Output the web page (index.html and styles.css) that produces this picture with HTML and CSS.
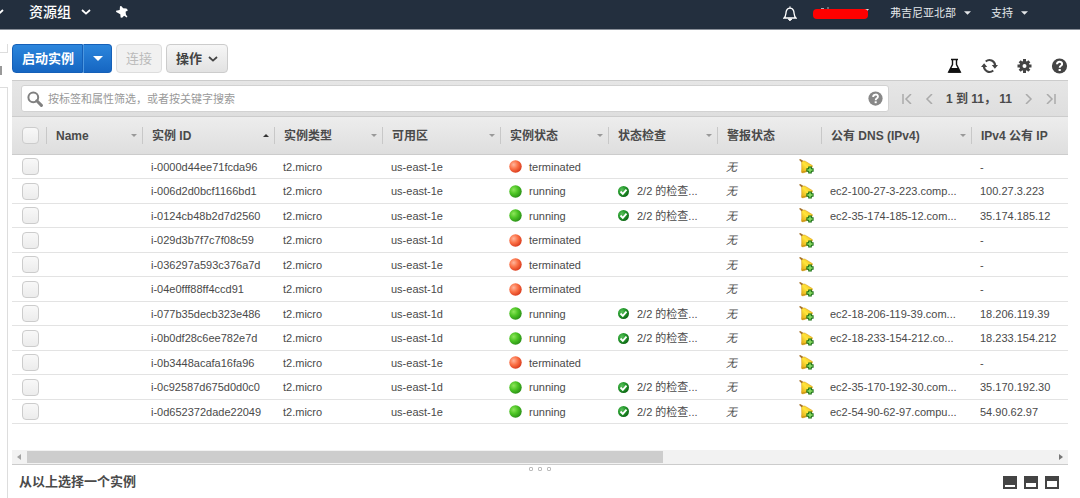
FILE: index.html
```
<!DOCTYPE html>
<html lang="zh-CN">
<head>
<meta charset="utf-8">
<title>实例</title>
<link rel="stylesheet" href="styles.css">
</head>
<body>
<svg class="defs" aria-hidden="true">
  <defs>
    <radialGradient id="g-red" cx="35%" cy="35%" r="70%"><stop offset="0" stop-color="#ffb59c"/><stop offset=".5" stop-color="#fb7146"/><stop offset="1" stop-color="#d93a1c"/></radialGradient>
    <radialGradient id="g-green" cx="35%" cy="35%" r="70%"><stop offset="0" stop-color="#8ee65c"/><stop offset=".5" stop-color="#4cc424"/><stop offset="1" stop-color="#2a8f17"/></radialGradient>
    <radialGradient id="g-ok" cx="35%" cy="35%" r="70%"><stop offset="0" stop-color="#5cc05c"/><stop offset=".5" stop-color="#249a2c"/><stop offset="1" stop-color="#0d6414"/></radialGradient>
    <linearGradient id="g-bell" x1="0" y1="1" x2="1" y2="0"><stop offset="0" stop-color="#e0a010"/><stop offset=".5" stop-color="#ffe53c"/><stop offset="1" stop-color="#f0b418"/></linearGradient>
  </defs>
  <symbol id="chev" viewBox="0 0 10 6"><path d="M1 1l4 3.600 4-3.600" fill="none" stroke="currentColor" stroke-width="1.800"/></symbol>
  <symbol id="down" viewBox="0 0 8 4"><path d="M0 0h8L4 4z" fill="currentColor"/></symbol>
  <symbol id="up" viewBox="0 0 8 4"><path d="M0 4h8L4 0z" fill="currentColor"/></symbol>
  <symbol id="red" viewBox="0 0 13 13"><circle cx="6.500" cy="6.500" r="6.200" fill="url(#g-red)"/></symbol>
  <symbol id="green" viewBox="0 0 13 13"><circle cx="6.500" cy="6.500" r="6.200" fill="url(#g-green)"/></symbol>
  <symbol id="ok" viewBox="0 0 13 13"><circle cx="6.500" cy="6.500" r="5.500" fill="url(#g-ok)"/><path d="M3.500 6.500l2.300 2.300 3.700-4.100" fill="none" stroke="#fff" stroke-width="1.900"/></symbol>
  <symbol id="alarm" viewBox="0 0 16 15"><path d="M0 .8L1.200 0l3 1.800L3.200 4z" fill="#a8742a"/><path d="M2.600 3.600C3.400 2.200 5 1.500 6.600 2.400L13.400 6.600C14.200 8.500 8 14.200 3 13.800 1.800 13.500 2.800 11.500 2.700 9z" fill="url(#g-bell)" stroke="#d39a14" stroke-width=".5"/><path d="M3 13.300C6.500 12.800 11 10.500 13 7.200" fill="none" stroke="#b8820e" stroke-width=".8"/><path d="M11 7.400v7.200M7.400 11h7.200" stroke="#176d12" stroke-width="3.600"/><path d="M11 8.400v5.200M8.400 11h5.200" stroke="#8fe268" stroke-width="1.500"/></symbol>
  <symbol id="help" viewBox="0 0 16 16"><circle cx="8" cy="8" r="7.600" fill="currentColor"/><path d="M5.500 6.300C5.600 3 10.700 3 10.600 6.100 10.500 7.900 8.200 7.700 8.200 9.800" fill="none" stroke="#fff" stroke-width="2"/><path d="M7.100 11h2.200v2H7.100z" fill="#fff"/></symbol>
</svg>

<header class="nav">
  <div class="nav-side">
    <button class="nav-item" aria-label="服务"><svg class="chev"><use href="#chev"/></svg></button>
    <button class="nav-item nav-group">资源组<svg class="chev"><use href="#chev"/></svg></button>
    <button class="nav-item" aria-label="固定"><svg class="pin" viewBox="0 0 12 12"><path d="M4 .2L5.200 0l2 2.300 3.200.2 1.600 1.800-2.400 1.500.3 2.700 1.500 2.300-.6.600-2.700-1.600-2 1.900-1.500-.3-.3-3.200L.2 6 0 4.800l3.700-.9z" fill="#fff"/></svg></button>
  </div>
  <div class="nav-side nav-right">
    <button class="nav-item" aria-label="通知"><svg class="notice" viewBox="0 0 14 15"><path d="M1 12c2.300-1.600 1.600-5 2.400-7.200C4 3.200 5.300 2.200 7 2.200s3 1 3.600 2.600C11.400 7 10.700 10.400 13 12z" fill="none" stroke="#fff" stroke-width="1.300"/><path d="M7 .3v2M5.200 13h3.600L7 14.800z" stroke="#fff" fill="#fff"/></svg></button>
    <button class="nav-item" aria-label="账户"><svg class="account" viewBox="0 0 57 12"><path d="M51 2h5l-2.500 3z" fill="#d9dde2"/><path d="M8 1.500h3M14 1h2" stroke="#aab0b8"/><rect y="2" width="55" height="10" rx="4" fill="#f00"/></svg></button>
    <button class="nav-item">弗吉尼亚北部<svg class="caret"><use href="#down"/></svg></button>
    <button class="nav-item">支持<svg class="caret"><use href="#down"/></svg></button>
  </div>
</header>

<div class="page">
  <aside class="rail"><div class="rail-top"></div><div class="rail-grip"></div><div class="rail-body"></div></aside>
  <main class="main">
    <div class="toolbar">
      <div class="actions">
        <div class="split"><button class="btn primary">启动实例</button><button class="btn primary more" aria-label="更多启动选项"><svg class="launch"><use href="#down"/></svg></button></div>
        <button class="btn" disabled>连接</button>
        <button class="btn">操作<svg class="chev"><use href="#chev"/></svg></button>
      </div>
      <div class="tools">
        <button class="tool" aria-label="实验"><svg viewBox="0 0 16 16"><path d="M4.500 1.500h7M6 2v4.500L2.200 14h11.600L10 6.500V2" fill="none" stroke="#111" stroke-width="1.400"/><path d="M4.300 10h7.400l2.500 4.800H1.800z" fill="#111"/></svg></button>
        <button class="tool" aria-label="刷新"><svg viewBox="0 0 18 16"><path d="M5 3.200C9 0 14.500 2.400 15 7.500M13 12.800C9 16 3.500 13.600 3 8.500" fill="none" stroke="#444" stroke-width="2.200"/><path d="M11.400 7H18l-3.300 4zM0 9h6.600L3.300 5z" fill="#444"/></svg></button>
        <button class="tool" aria-label="设置"><svg viewBox="0 0 16 16"><g stroke="#444" stroke-width="3"><path d="M8 1v14M1 8h14M3.200 3.200l9.600 9.600M12.800 3.200l-9.600 9.600"/></g><circle cx="8" cy="8" r="5" fill="#444"/><circle cx="8" cy="8" r="2" fill="#fff"/></svg></button>
        <button class="tool" aria-label="帮助"><svg viewBox="0 0 16 16"><use href="#help"/></svg></button>
      </div>
    </div>

    <div class="filter">
      <div class="search">
        <svg class="lens" viewBox="0 0 16 16"><circle cx="6.300" cy="6.300" r="4.900" fill="none" stroke="#808080" stroke-width="2"/><path d="M9.800 9.800l4.600 4.600" stroke="#808080" stroke-width="3" stroke-linecap="round"/></svg>
        <input type="text" aria-label="筛选实例" placeholder="按标签和属性筛选，或者按关键字搜索">
        <button class="hint" aria-label="搜索帮助"><svg viewBox="0 0 16 16"><use href="#help"/></svg></button>
      </div>
      <div class="pager">
        <button aria-label="第一页"><svg viewBox="0 0 10 10"><path d="M1 0v10M9 0L4 5l5 5"/></svg></button>
        <button aria-label="上一页"><svg viewBox="0 0 10 10"><path d="M8 0L3 5l5 5"/></svg></button>
        <span>1 到 11， 11</span>
        <button aria-label="下一页"><svg viewBox="0 0 10 10"><path d="M2 0l5 5-5 5"/></svg></button>
        <button aria-label="最后一页"><svg viewBox="0 0 10 10"><path d="M1 0l5 5-5 5M9 0v10"/></svg></button>
      </div>
    </div>

    <table class="grid">
      <colgroup><col class="c-pick"><col class="c-name"><col class="c-id"><col class="c-type"><col class="c-zone"><col class="c-state"><col class="c-check"><col class="c-alarm"><col class="c-dns"><col></colgroup>
      <thead>
        <tr>
          <th class="pick"><input type="checkbox" aria-label="全选"></th>
          <th><button class="head">Name<svg class="sort"><use href="#down"/></svg></button></th>
          <th><button class="head">实例 ID<svg class="sort on"><use href="#up"/></svg></button></th>
          <th><button class="head">实例类型<svg class="sort"><use href="#down"/></svg></button></th>
          <th><button class="head">可用区<svg class="sort"><use href="#down"/></svg></button></th>
          <th><button class="head">实例状态<svg class="sort"><use href="#down"/></svg></button></th>
          <th><button class="head">状态检查<svg class="sort"><use href="#down"/></svg></button></th>
          <th><div class="head">警报状态</div></th>
          <th><button class="head">公有 DNS (IPv4)<svg class="sort"><use href="#down"/></svg></button></th>
          <th><div class="head">IPv4 公有 IP</div></th>
        </tr>
      </thead>
      <tbody>
        <tr><td class="pick"><input type="checkbox" aria-label="i-0000d44ee71fcda96"></td><td></td><td>i-0000d44ee71fcda96</td><td>t2.micro</td><td>us-east-1e</td><td><div class="cell"><svg class="dot"><use href="#red"/></svg>terminated</div></td><td></td><td><div class="cell alarm"><i>无</i><svg><use href="#alarm"/></svg></div></td><td></td><td>-</td></tr>
        <tr><td class="pick"><input type="checkbox" aria-label="i-006d2d0bcf1166bd1"></td><td></td><td>i-006d2d0bcf1166bd1</td><td>t2.micro</td><td>us-east-1e</td><td><div class="cell"><svg class="dot"><use href="#green"/></svg>running</div></td><td><div class="cell"><svg class="dot"><use href="#ok"/></svg>2/2 的检查...</div></td><td><div class="cell alarm"><i>无</i><svg><use href="#alarm"/></svg></div></td><td>ec2-100-27-3-223.comp...</td><td>100.27.3.223</td></tr>
        <tr><td class="pick"><input type="checkbox" aria-label="i-0124cb48b2d7d2560"></td><td></td><td>i-0124cb48b2d7d2560</td><td>t2.micro</td><td>us-east-1e</td><td><div class="cell"><svg class="dot"><use href="#green"/></svg>running</div></td><td><div class="cell"><svg class="dot"><use href="#ok"/></svg>2/2 的检查...</div></td><td><div class="cell alarm"><i>无</i><svg><use href="#alarm"/></svg></div></td><td>ec2-35-174-185-12.com...</td><td>35.174.185.12</td></tr>
        <tr><td class="pick"><input type="checkbox" aria-label="i-029d3b7f7c7f08c59"></td><td></td><td>i-029d3b7f7c7f08c59</td><td>t2.micro</td><td>us-east-1d</td><td><div class="cell"><svg class="dot"><use href="#red"/></svg>terminated</div></td><td></td><td><div class="cell alarm"><i>无</i><svg><use href="#alarm"/></svg></div></td><td></td><td>-</td></tr>
        <tr><td class="pick"><input type="checkbox" aria-label="i-036297a593c376a7d"></td><td></td><td>i-036297a593c376a7d</td><td>t2.micro</td><td>us-east-1e</td><td><div class="cell"><svg class="dot"><use href="#red"/></svg>terminated</div></td><td></td><td><div class="cell alarm"><i>无</i><svg><use href="#alarm"/></svg></div></td><td></td><td>-</td></tr>
        <tr><td class="pick"><input type="checkbox" aria-label="i-04e0fff88ff4ccd91"></td><td></td><td>i-04e0fff88ff4ccd91</td><td>t2.micro</td><td>us-east-1d</td><td><div class="cell"><svg class="dot"><use href="#red"/></svg>terminated</div></td><td></td><td><div class="cell alarm"><i>无</i><svg><use href="#alarm"/></svg></div></td><td></td><td>-</td></tr>
        <tr><td class="pick"><input type="checkbox" aria-label="i-077b35decb323e486"></td><td></td><td>i-077b35decb323e486</td><td>t2.micro</td><td>us-east-1d</td><td><div class="cell"><svg class="dot"><use href="#green"/></svg>running</div></td><td><div class="cell"><svg class="dot"><use href="#ok"/></svg>2/2 的检查...</div></td><td><div class="cell alarm"><i>无</i><svg><use href="#alarm"/></svg></div></td><td>ec2-18-206-119-39.com...</td><td>18.206.119.39</td></tr>
        <tr><td class="pick"><input type="checkbox" aria-label="i-0b0df28c6ee782e7d"></td><td></td><td>i-0b0df28c6ee782e7d</td><td>t2.micro</td><td>us-east-1d</td><td><div class="cell"><svg class="dot"><use href="#green"/></svg>running</div></td><td><div class="cell"><svg class="dot"><use href="#ok"/></svg>2/2 的检查...</div></td><td><div class="cell alarm"><i>无</i><svg><use href="#alarm"/></svg></div></td><td>ec2-18-233-154-212.co...</td><td>18.233.154.212</td></tr>
        <tr><td class="pick"><input type="checkbox" aria-label="i-0b3448acafa16fa96"></td><td></td><td>i-0b3448acafa16fa96</td><td>t2.micro</td><td>us-east-1e</td><td><div class="cell"><svg class="dot"><use href="#red"/></svg>terminated</div></td><td></td><td><div class="cell alarm"><i>无</i><svg><use href="#alarm"/></svg></div></td><td></td><td>-</td></tr>
        <tr><td class="pick"><input type="checkbox" aria-label="i-0c92587d675d0d0c0"></td><td></td><td>i-0c92587d675d0d0c0</td><td>t2.micro</td><td>us-east-1d</td><td><div class="cell"><svg class="dot"><use href="#green"/></svg>running</div></td><td><div class="cell"><svg class="dot"><use href="#ok"/></svg>2/2 的检查...</div></td><td><div class="cell alarm"><i>无</i><svg><use href="#alarm"/></svg></div></td><td>ec2-35-170-192-30.com...</td><td>35.170.192.30</td></tr>
        <tr><td class="pick"><input type="checkbox" aria-label="i-0d652372dade22049"></td><td></td><td>i-0d652372dade22049</td><td>t2.micro</td><td>us-east-1e</td><td><div class="cell"><svg class="dot"><use href="#green"/></svg>running</div></td><td><div class="cell"><svg class="dot"><use href="#ok"/></svg>2/2 的检查...</div></td><td><div class="cell alarm"><i>无</i><svg><use href="#alarm"/></svg></div></td><td>ec2-54-90-62-97.compu...</td><td>54.90.62.97</td></tr>
      </tbody>
    </table>

    <div class="scrollbar">
      <svg class="arrow" viewBox="0 0 4 6"><path d="M4 0v6L0 3z" fill="#a3a3a3"/></svg>
      <div class="track"><div class="thumb"></div></div>
      <svg class="arrow" viewBox="0 0 4 6"><path d="M0 0v6l4-3z" fill="#777"/></svg>
    </div>
    <div class="splitter"><span></span><span></span><span></span></div>
    <section class="detail">
      <h2>从以上选择一个实例</h2>
      <div class="layouts">
        <button aria-label="小面板"><svg viewBox="0 0 14 13"><path fill="#444" d="M0 0h14v13H0z"/><path fill="#fff" d="M2 9h10v2H2z"/></svg></button>
        <button aria-label="中面板"><svg viewBox="0 0 14 13"><path fill="#444" d="M0 0h14v13H0z"/><path fill="#fff" d="M2 7h10v4H2z"/></svg></button>
        <button aria-label="大面板"><svg viewBox="0 0 14 13"><path fill="#444" d="M0 0h14v13H0z"/><path fill="#fff" d="M2 5h10v6H2z"/></svg></button>
      </div>
    </section>
  </main>
</div>
</body>
</html>
```

FILE: styles.css
```
* { box-sizing: border-box; }
body {
  margin: 0;
  min-height: 100vh;
  display: flex;
  flex-direction: column;
  background: #fff;
  color: #4a4a4a;
  font: 11px/16px "Liberation Sans", Arial, "Noto Sans CJK SC", sans-serif;
}
button, input { font: inherit; color: inherit; }
button { border: 0; padding: 0; background: none; cursor: pointer; }
svg { display: block; flex: none; }
.defs { position: absolute; width: 0; height: 0; }

.nav {
  display: flex;
  justify-content: space-between;
  height: 30px;
  padding-bottom: 5px;
  background: #232f3e;
  border-bottom: 1px solid #8a9099;
  color: #fff;
}
.nav-side { display: flex; align-items: center; gap: 25px; overflow: hidden; }
.nav-side:first-child { margin-left: -6px; }
.nav-right { gap: 20px; padding: 2px 52px 0 0; color: #e4e7ea; }
.nav-item { display: flex; align-items: center; gap: 8px; white-space: nowrap; }
.nav-group { gap: 10px; font-size: 14px; font-weight: 500; }
.chev { width: 10px; height: 6px; }
.caret { width: 7px; height: 4px; }
.pin { width: 12px; height: 12px; }
.notice { width: 14px; height: 15px; }
.account { width: 57px; height: 12px; }
.nav-item:has(.notice) { margin-right: -4px; }

.page { flex: 1; display: flex; gap: 4px; }
.rail { width: 8px; flex: none; display: flex; flex-direction: column; padding-top: 14px; }
.rail-top { height: 9px; border: solid #ddd; border-width: 0 1px 1px 0; }
.rail-grip { width: 2px; height: 9px; margin: 13px 0 12px; background: #999; }
.rail-body { flex: 1; border: solid #ddd; border-width: 1px 1px 0 0; }
.main { flex: 1; min-width: 0; padding-right: 12px; }

.toolbar { display: flex; justify-content: space-between; height: 50px; padding-top: 14px; }
.actions { display: flex; align-items: flex-start; gap: 4px; }
.split { display: flex; }
.btn {
  display: flex;
  align-items: center;
  gap: 6px;
  height: 29px;
  padding: 0 9px;
  border: 1px solid #ccc;
  border-radius: 4px;
  background: linear-gradient(#f6f6f6, #e2e2e2);
  font-size: 13px;
  font-weight: 700;
  color: #444;
}
.btn:disabled { background: #f1f1f1; border-color: #ddd; color: #bbb; font-weight: 400; }
.primary {
  padding: 0 8px 0 9px;
  border-color: #1560b8;
  border-radius: 4px 0 0 4px;
  background: linear-gradient(#2c86dc, #1666c2);
  color: #fff;
}
.more { border-left-color: #4d97df; border-radius: 0 4px 4px 0; }
.launch { width: 10px; height: 5px; }
.tools { display: flex; align-items: center; gap: 18px; padding-top: 7px; color: #444; }
.tools svg { width: 17px; height: 16px; }

.filter {
  display: flex;
  align-items: center;
  gap: 13px;
  height: 37px;
  padding: 0 12px 0 9px;
  background: linear-gradient(#e6e6e6, #dedede);
  border: solid #ccc;
  border-width: 1px 0;
}
.search {
  flex: 1;
  display: flex;
  align-items: center;
  height: 27px;
  padding: 0 5px;
  background: #fff;
  border: 1px solid #d2d2d2;
  border-radius: 3px;
}
.search input { flex: 1; min-width: 0; border: 0; padding: 0 5px; outline: 0; background: none; }
.search input::placeholder { color: #999; opacity: 1; }
.lens { width: 16px; height: 16px; }
.hint { color: #888; }
.hint svg { width: 15px; height: 15px; }
.pager { display: flex; align-items: center; gap: 12px; font-size: 12px; font-weight: 700; white-space: nowrap; }
.pager svg { width: 10px; height: 10px; fill: none; stroke: #aaa; stroke-width: 1.5; }

.grid { width: 100%; table-layout: fixed; border-collapse: separate; border-spacing: 0; }
.c-pick { width: 34px; }
.c-name { width: 96px; }
.c-id { width: 132px; }
.c-type { width: 108px; }
.c-zone { width: 118px; }
.c-state { width: 108px; }
.c-check { width: 109px; }
.c-alarm { width: 104px; }
.c-dns { width: 150px; }
.grid th { height: 38px; padding: 0; background: linear-gradient(#ededed, #dedede); border-bottom: 1px solid #ccc; text-align: left; }
.grid td { height: 25px; padding: 0 0 0 9px; border-bottom: 1px solid #e3e3e3; white-space: nowrap; overflow: hidden; }
.grid tr:nth-child(odd) td { height: 24px; }
.grid .pick { padding-left: 10px; }
.grid input {
  display: block;
  appearance: none;
  width: 17px;
  height: 17px;
  margin: 0;
  border: 1px solid #ccc;
  border-radius: 4px;
  background: linear-gradient(#f8f8f8, #ececec);
}
.head {
  display: flex;
  align-items: center;
  justify-content: space-between;
  width: 100%;
  height: 17px;
  padding: 0 5px 0 9px;
  border-left: 1px solid #c8c8c8;
  font-size: 12px;
  font-weight: 700;
  white-space: nowrap;
}
.sort { width: 6px; height: 3px; color: #999; }
.sort.on { color: #333; }
.cell { display: flex; align-items: center; gap: 7px; }
.dot { width: 13px; height: 13px; }
.alarm { justify-content: space-between; padding-right: 6px; }
.alarm svg { width: 16px; height: 15px; }

.scrollbar {
  display: flex;
  align-items: center;
  gap: 6px;
  height: 15px;
  margin-top: 26px;
  padding: 0 5px;
  background: #f2f2f2;
  border-bottom: 1px solid #ccc;
}
.arrow { width: 4px; height: 6px; }
.track { flex: 1; }
.thumb { width: 62%; height: 12px; background: #cdcdcd; }
.splitter { display: flex; justify-content: center; gap: 5px; padding: 2px 0 1px; }
.splitter span { width: 4px; height: 4px; border: 1px solid #bbb; border-radius: 1px; }
.detail { display: flex; align-items: center; justify-content: space-between; padding: 0 9px 0 7px; }
.detail h2 { margin: 0; font-size: 13px; line-height: 20px; }
.layouts { display: flex; gap: 7px; }
.layouts svg { width: 14px; height: 13px; }
```
